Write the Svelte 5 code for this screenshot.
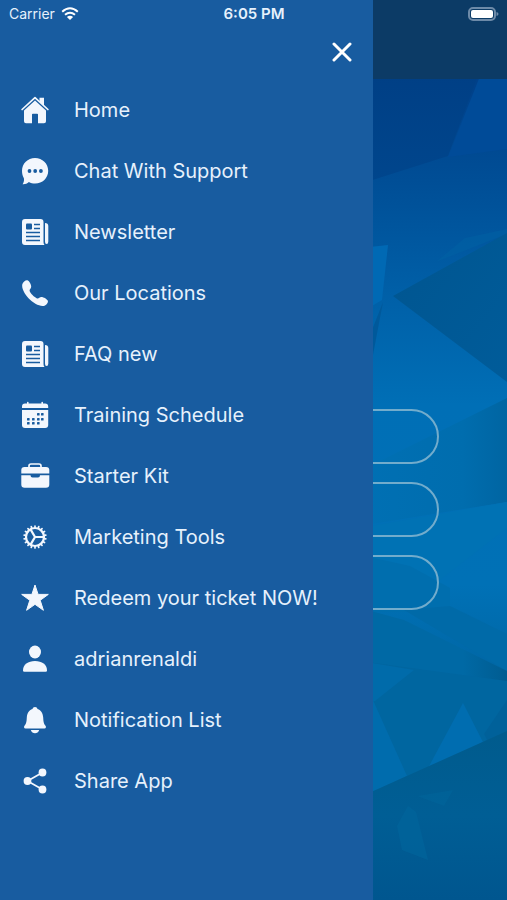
<script>
    let open = true;

    const items = [
        { icon: "home", label: "Home" },
        { icon: "chat", label: "Chat With Support" },
        { icon: "news", label: "Newsletter" },
        { icon: "phone", label: "Our Locations" },
        { icon: "news", label: "FAQ new" },
        { icon: "calendar", label: "Training Schedule" },
        { icon: "case", label: "Starter Kit" },
        { icon: "gear", label: "Marketing Tools" },
        { icon: "star", label: "Redeem your ticket NOW!" },
        { icon: "person", label: "adrianrenaldi" },
        { icon: "bell", label: "Notification List" },
        { icon: "share", label: "Share App" },
    ];

    const teeth = Array.from({ length: 18 }, (_, i) => i * 20);
    const days = [
        [17, 13], [21, 13],
        [7, 18], [12, 18], [17, 18], [21, 18],
        [7, 22], [12, 22], [17, 22],
    ];
</script>

<div class="screen">
    <main class="app">
        <svg class="scene" viewBox="0 0 507 900" preserveAspectRatio="none" aria-hidden="true">
            <defs>
                <linearGradient id="base" x1="0" y1="0" x2="0" y2="1">
                    <stop offset="0.08" stop-color="#003f88" />
                    <stop offset="0.2" stop-color="#004e96" />
                    <stop offset="0.33" stop-color="#0060a8" />
                    <stop offset="0.45" stop-color="#006fb6" />
                    <stop offset="0.65" stop-color="#0071b6" />
                    <stop offset="0.78" stop-color="#00639f" />
                    <stop offset="1" stop-color="#005690" />
                </linearGradient>
                <linearGradient id="top" x1="0" y1="0" x2="0" y2="1">
                    <stop offset="0" stop-color="#003f85" />
                    <stop offset="1" stop-color="#00468d" />
                </linearGradient>
                <linearGradient id="shade" x1="0" y1="0" x2="1" y2="1">
                    <stop offset="0" stop-color="#005590" />
                    <stop offset="1" stop-color="#005c9a" />
                </linearGradient>
                <linearGradient id="mid" x1="0" y1="0" x2="1" y2="0">
                    <stop offset="0" stop-color="#0070b4" />
                    <stop offset="0.7" stop-color="#006dae" />
                    <stop offset="1" stop-color="#0065a2" />
                </linearGradient>
                <linearGradient id="fold" x1="0" y1="0" x2="1" y2="0">
                    <stop offset="0.7" stop-color="#0069a5" />
                    <stop offset="1" stop-color="#005c91" />
                </linearGradient>
                <linearGradient id="low" x1="0" y1="0" x2="0" y2="1">
                    <stop offset="0" stop-color="#005b8d" />
                    <stop offset="0.5" stop-color="#005e95" />
                    <stop offset="1" stop-color="#00568f" />
                </linearGradient>
            </defs>
            <rect width="507" height="900" fill="url(#base)" />
            <path d="M360 70H480L448 156L360 184Z" fill="url(#top)" />
            <path d="M480 76H507V149L448 157Z" fill="#004b98" />
            <path d="M507 229L465 238L436 262L507 234Z" fill="#0061a3" opacity=".5" />
            <path d="M507 233L393 296L507 382Z" fill="url(#shade)" />
            <path d="M360 248L388 245L382 300L372 306H360Z" fill="#0069b4" />
            <path d="M383 302L372 360V330Z" fill="#00599b" />
            <path d="M507 398L378 462L360 470V526L507 502Z" fill="url(#mid)" />
            <path d="M360 528L507 502V528L440 580L360 600Z" fill="#0072b4" />
            <path d="M360 555L410 566L450 588V612H360Z" fill="#006eae" />
            <path d="M404 610L450 606L507 634V671Z" fill="#006aa8" />
            <path d="M360 608L404 620L507 671V682L360 661Z" fill="url(#fold)" />
            <path d="M360 661L507 681V733L360 800Z" fill="#0066a0" />
            <path d="M360 661L414 670L375 701H360Z" fill="#006baa" />
            <path d="M372 698L407 776L360 798Z" fill="#006cad" />
            <path d="M463 703L427 770L484 744Z" fill="#006db0" />
            <path d="M507 700L484 734L488 742L507 733Z" fill="#00619a" />
            <path d="M507 731L360 797V900H507Z" fill="url(#low)" />
            <path d="M417 796L453 790L444 806Z" fill="#00659c" opacity=".5" />
            <path d="M408 806L397 826L402 850L428 860L416 812Z" fill="#00659c" opacity=".6" />
        </svg>
        <header class="topbar"></header>
        <div class="actions">
            <button class="action" type="button" aria-label="First action"></button>
            <button class="action" type="button" aria-label="Second action"></button>
            <button class="action" type="button" aria-label="Third action"></button>
        </div>
    </main>

    {#if open}
        <aside class="drawer">
            <button class="close" type="button" aria-label="Close menu" on:click={() => (open = false)}>
                <svg viewBox="0 0 20 20" aria-hidden="true">
                    <path d="M2 2L18 18M18 2L2 18" />
                </svg>
            </button>

            <nav>
                {#each items as item}
                    <a class="item" href="#{item.label}">
                        <svg class="icon" viewBox="0 0 30 30" aria-hidden="true">
                            {#if item.icon === "home"}
                                <path d="M19.500 2.800h4.500V11l-4.500-4.200z" />
                                <path class="line thin" d="M2.100 14.500L15 2.600L27.900 14.500" />
                                <path d="M15 5.500L26 15.600V26.300q0 2-2 2H18V19.500q0-.8-.8-.8h-4.400q-.8 0-.8.8V28.300H6q-2 0-2-2V15.600z" />
                            {:else if item.icon === "chat"}
                                <path d="M15 2C22.400 2 28.200 7.500 28.200 14.800S22.400 27.600 15.200 27.600C12.800 27.600 10.600 27 8.900 26C7 27.800 5 28.400 2.600 28.200C3.700 26.600 4.300 24.600 3.900 22.200C2.600 20.200 2 17.600 2 14.800C2 7.500 7.700 2 15 2Z" />
                                <g class="cut">
                                    <circle cx="9.500" cy="15" r="1.900" />
                                    <circle cx="15.200" cy="15" r="1.900" />
                                    <circle cx="20.900" cy="15" r="1.900" />
                                </g>
                            {:else if item.icon === "news"}
                                <path d="M5 2H20.500q3 0 3 3V25q0 1.800 1 3H5q-3 0-3-3V5q0-3 3-3Z" />
                                <path d="M25 6q3.300 0 3.300 3V24.500q0 2.500-1.700 2.500T25 24.500Z" />
                                <rect class="cut" x="6" y="6.500" width="6" height="6" rx="1" />
                                <path class="cutline" d="M14 7.500h6M14 11.500h6M6 15.500H20M6 19.500H20M6 23.500H20" />
                            {:else if item.icon === "phone"}
                                <path d="M2.300 6.300C3 4 5.500 2 7.300 2.300C9 2.700 11.300 6.500 11.200 8.700C11.100 10.600 9.300 11.200 9.600 12.800C10 15 14.500 19.500 17 20.400C19 21 19.200 18.900 21.400 18.900C23.500 18.900 27.400 21.200 27.900 22.900C28.300 24.700 26 27.400 23.700 27.900C19.500 28.700 13 25 8.500 20.300C4.500 16 1.400 10 2.300 6.300Z" />
                            {:else if item.icon === "calendar"}
                                <path d="M5 3.500H7V2.500q0-.8.8-.8t.8.8V3.500H21.400V2.500q0-.8.8-.8t.8.800V3.500h2q3.200 0 3.200 3V8H2V6.500q0-3 3-3Z" />
                                <path d="M2 10H28.200V25q0 3-3 3H5q-3 0-3-3Z" />
                                {#each days as [x, y]}
                                    <rect class="cut" {x} {y} width="2.600" height="2.600" rx=".6" />
                                {/each}
                            {:else if item.icon === "case"}
                                <path class="line thin" d="M9 7V5q0-2 2-2h8q2 0 2 2V7" />
                                <path d="M4.500 6H26q3.300 0 3.300 3V12.500H1.300V9q0-3 3.200-3Z" />
                                <path d="M1.300 14.300H10.500q0 2.300 2 2.300h5.500q2 0 2-2.300H29.300V23.500q0 3.300-3.300 3.300H4.600q-3.300 0-3.300-3.300Z" />
                            {:else if item.icon === "gear"}
                                <circle class="line" cx="15" cy="15" r="9" />
                                {#each teeth as angle}
                                    <path class="line thin" d="M15 4V6" transform="rotate({angle} 15 15)" />
                                {/each}
                                <path class="line" d="M15 15H23.500M15 15L10.700 7.600M15 15L10.700 22.400" />
                            {:else if item.icon === "star"}
                                <path class="joined" d="M15 2L18.100 11.400H28.300L20.200 17.300L23.400 27.300L15 21.300L6.600 27.300L9.800 17.300L1.700 11.400H11.900Z" />
                            {:else if item.icon === "person"}
                                <ellipse cx="15" cy="8" rx="6" ry="6.500" />
                                <path d="M3 26.500C3 20.500 8 17 15 17S27 20.500 27 26.500q0 1.200-1.300 1.200H4.300Q3 27.700 3 26.500Z" />
                            {:else if item.icon === "bell"}
                                <path d="M15 1.900C16.400 1.900 17.200 2.800 17.500 3.900C21.300 5.200 23 8.500 23.200 12.500C23.400 17 23.800 18.800 25.500 20.700C26.300 21.600 26.100 23.500 24.500 23.500H5.500C3.900 23.500 3.700 21.600 4.500 20.700C6.200 18.800 6.600 17 6.800 12.500C7 8.500 8.700 5.200 12.500 3.900C12.800 2.800 13.600 1.900 15 1.900Z" />
                                <path d="M10.800 25H19.200Q18 28.300 15 28.300T10.800 25Z" />
                            {:else}
                                <path class="line thin" d="M22.500 6.500L7.500 15L22.500 23.500" />
                                <circle cx="22.500" cy="6.500" r="3.900" />
                                <circle cx="7.500" cy="15" r="3.900" />
                                <circle cx="22.500" cy="23.500" r="3.900" />
                            {/if}
                        </svg>
                        <span>{item.label}</span>
                    </a>
                {/each}
            </nav>
        </aside>
    {/if}

    <div class="status">
        <div class="carrier">
            <span>Carrier</span>
            <svg viewBox="0 0 18 14" width="18" height="14" aria-hidden="true">
                <path class="wave" d="M1.200 4.700Q9-2.200 16.800 4.700" />
                <path class="wave" d="M4 7.800Q9 3.600 14 7.800" />
                <path d="M9 13L5.900 9.900Q9 7.500 12.100 9.900Z" />
            </svg>
        </div>
        <time>6:05 PM</time>
        <svg class="battery" viewBox="0 0 31 14" width="31" height="14" aria-hidden="true">
            <rect class="shell" x="1" y="1" width="26" height="12" rx="4" />
            <rect x="3" y="3" width="22" height="8" rx="2" />
            <path class="tip" d="M28.500 5Q30.500 5.600 30.500 7T28.500 9Z" />
        </svg>
    </div>
</div>

<style>
    :global(body) {
        margin: 0;
        background: #185ca0;
    }
    .screen {
        display: grid;
        min-height: 100vh;
        font-family: Inter, "Liberation Sans", sans-serif;
        color: #e6f1fc;
    }
    .app,
    .drawer,
    .status {
        grid-area: 1 / 1;
        position: relative;
    }
    .app {
        display: flex;
        flex-direction: column;
        overflow: hidden;
    }
    .scene {
        position: absolute;
        width: 100%;
        height: 100%;
    }
    .topbar {
        position: relative;
        height: 79px;
        background: #0c3b66;
    }
    .actions {
        position: relative;
        display: flex;
        flex-direction: column;
        gap: 18px;
        padding: 330px 68px 0;
    }
    .action {
        height: 55px;
        border: 2px solid #72accc;
        border-radius: 28px;
        background: none;
    }
    .drawer {
        box-sizing: border-box;
        display: flex;
        flex-direction: column;
        width: 73.5%;
        padding-top: 36px;
        background: #185ca0;
    }
    .close {
        align-self: flex-end;
        width: 32px;
        height: 32px;
        margin-right: 15px;
        padding: 6px;
        border: none;
        background: none;
        cursor: pointer;
    }
    .close svg {
        display: block;
        width: 20px;
        height: 20px;
        stroke: #fff;
        stroke-width: 3;
        stroke-linecap: round;
    }
    nav {
        padding-top: 11px;
    }
    .item {
        display: flex;
        align-items: center;
        gap: 24px;
        height: 61px;
        padding-left: 20px;
        color: inherit;
        font-size: 20px;
        white-space: nowrap;
        text-decoration: none;
    }
    .icon {
        flex: none;
        width: 30px;
        height: 30px;
        fill: #f3f7fd;
    }
    .cut {
        fill: #185ca0;
    }
    .cutline {
        fill: none;
        stroke: #185ca0;
        stroke-width: 1.5;
    }
    .line {
        fill: none;
        stroke: #f3f7fd;
        stroke-width: 2.2;
        stroke-linecap: round;
        stroke-linejoin: round;
    }
    .thin {
        stroke-width: 1.7;
    }
    .joined {
        stroke: #f3f7fd;
        stroke-linejoin: round;
    }
    .status {
        align-self: start;
        display: grid;
        grid-template-columns: 1fr auto 1fr;
        align-items: center;
        height: 27px;
        padding: 0 8px 0 9px;
        font-size: 14px;
        pointer-events: none;
    }
    .status svg {
        fill: #fff;
    }
    .carrier {
        display: flex;
        align-items: center;
        gap: 6px;
    }
    .status .wave {
        fill: none;
        stroke: #fff;
        stroke-width: 2;
    }
    time {
        font-size: 15px;
        font-weight: 600;
    }
    .battery {
        justify-self: end;
    }
    .battery .shell {
        fill: none;
        stroke: #6d8aa8;
        stroke-width: 2;
    }
    .battery .tip {
        fill: #6d8aa8;
    }
</style>
